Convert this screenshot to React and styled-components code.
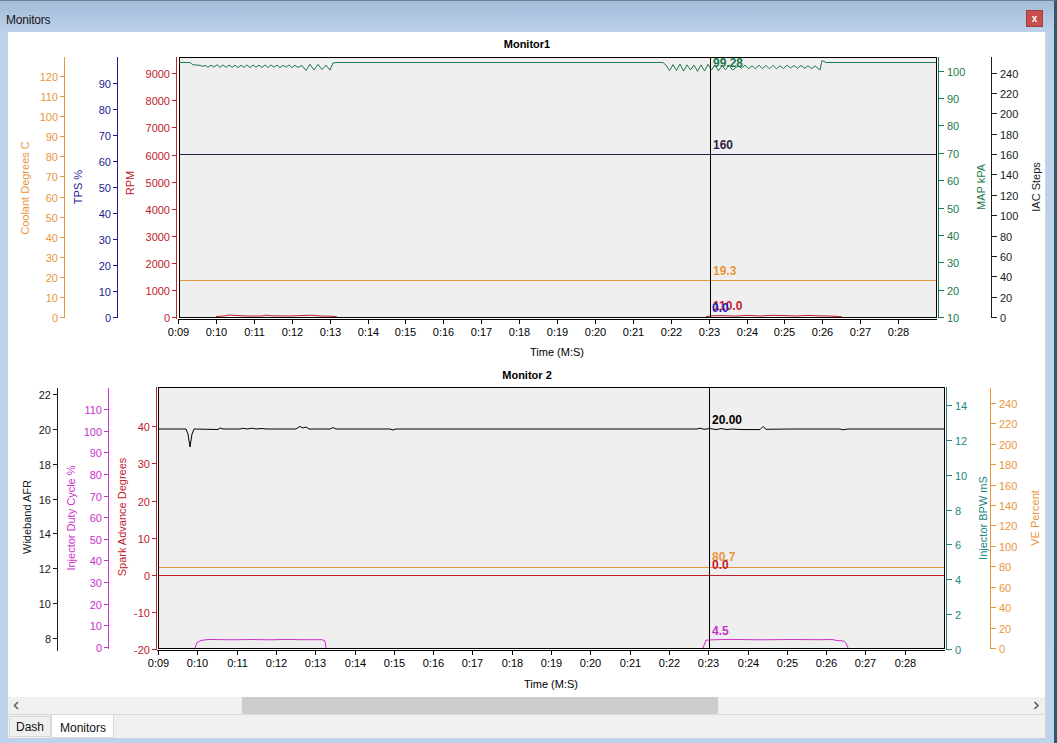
import React from "react";
import styled, { createGlobalStyle } from "styled-components";

const GlobalStyle = createGlobalStyle`
  html, body { margin: 0; padding: 0; background: #fff; }
  body { font-family: "Liberation Sans", Arial, sans-serif; overflow: hidden; }
`;

const ORANGE = "#e8963c";
const NAVY = "#1c1c8e";
const RED = "#c4202a";
const GREEN = "#1d7a4d";
const DARK = "#1a1a1a";
const MAGENTA = "#cc30cc";
const TEAL = "#248585";
const PURPLE = "#2e1f46";

const Window = styled.div`
  width: 1057px;
  height: 743px;
  box-sizing: border-box;
  display: flex;
  flex-direction: column;
  background: linear-gradient(180deg, #a4bcd9 0px, #bcd1ea 31px, #bdd3ec 100%);
  border-top: 1px solid #6d8094;
  border-right: 3px solid #34566b;
  padding: 0 8px 5px 8px;
`;

const TitleBar = styled.div`
  height: 31px;
  flex: none;
  display: flex;
  justify-content: space-between;
  align-items: flex-start;
`;

const Title = styled.span`
  margin: 12px 0 0 -2px;
  font-size: 12px;
  color: #161616;
  letter-spacing: -0.2px;
`;

const CloseButton = styled.div`
  width: 17px;
  height: 17px;
  margin: 9px 3px 0 0;
  background: #c7504f;
  border: 1px solid #a33e3e;
  box-sizing: border-box;
  color: #fff;
  font-size: 10px;
  font-weight: bold;
  display: flex;
  align-items: center;
  justify-content: center;
  line-height: 1;
`;

const Body = styled.div`
  flex: 1;
  display: flex;
  flex-direction: column;
  background: #f0f0f0;
  border-right: 1px solid #d4d4d4;
`;

const ChartArea = styled.div`
  height: 665px;
  flex: none;
  background: #fff;
  display: flex;
  flex-direction: column;
`;

const ChartSvg = styled.svg`
  display: block;
  font-family: "Liberation Sans", Arial, sans-serif;
`;

const AxisLabel = styled.text`
  font-size: 11px;
  fill: ${(p) => p.$color};
`;

const AxisTitle = styled.text`
  font-size: 11px;
  fill: ${(p) => p.$color};
`;

const ValueText = styled.text`
  font-size: 12px;
  font-weight: bold;
  fill: ${(p) => p.$color};
`;

const ChartTitle = styled.text`
  font-size: 11px;
  font-weight: bold;
  fill: #000;
`;

const ScrollBar = styled.div`
  height: 17px;
  flex: none;
  display: flex;
  align-items: stretch;
  background: #f0f0f0;
  border-bottom: 1px solid #dadada;
`;

const ArrowButton = styled.div`
  width: 17px;
  flex: none;
  display: flex;
  align-items: center;
  justify-content: center;
`;

const Track = styled.div`
  flex: 1;
  display: flex;
  align-items: stretch;
`;

const Thumb = styled.div`
  background: #cdcdcd;
  margin-left: ${(p) => p.$offset}px;
  width: ${(p) => p.$size}px;
`;

const TabStrip = styled.div`
  height: 23px;
  flex: none;
  display: flex;
  align-items: flex-start;
  padding-left: 1px;
  background: #f0f0f0;
`;

const Tab = styled.div`
  box-sizing: border-box;
  height: ${(p) => (p.$active ? 23 : 21)}px;
  margin-top: ${(p) => (p.$active ? 0 : 1)}px;
  padding: ${(p) => (p.$active ? "6px 7px 0 8px" : "3px 6px 0 6px")};
  font-size: 12px;
  color: #111;
  background: ${(p) => (p.$active ? "#ffffff" : "#f0f0f0")};
  border: 1px solid #d9d9d9;
  border-top: ${(p) => (p.$active ? "none" : "1px solid #d9d9d9")};
`;

/* ---------- data helpers ---------- */
function rng(seed) {
  let s = seed;
  return () => {
    s = (s * 16807) % 2147483647;
    return (s - 1) / 2147483646;
  };
}

const range = (a, b, step) => {
  const out = [];
  for (let v = a; v <= b + 1e-9; v += step) out.push(v);
  return out;
};

const pts = (arr) => arr.map(([x, y]) => `${x.toFixed(1)},${y.toFixed(1)}`).join(" ");

function zig(x0, x1, step, base, ampFn, seed) {
  const r = rng(seed);
  const out = [];
  let i = 0;
  for (let x = x0; x <= x1; x += step, i++) {
    const a = ampFn(x) * (0.55 + 0.45 * r());
    out.push([x, base + (i % 2 === 0 ? -a : a)]);
  }
  return out;
}

/* Monitor 1 series */
const mapLine = [
  [179, 62.5], [190, 62.5], [193, 64.8], [199, 65.2], [203, 66.4],
  ...zig(205, 300, 3, 66.2, () => 1.6, 11),
  ...zig(302, 330, 4, 67.5, () => 3.6, 5),
  [333, 63], [336, 62.5], [663, 62.5],
  ...zig(666, 735, 3.5, 67.5, () => 4.2, 3),
  ...zig(738, 818, 3.5, 67, () => 2, 17),
  [820, 70], [822, 60.5], [826, 62.5], [936, 62.5],
];

const rpmA = [
  [216, 316.5], [224, 316], [229, 315], [235, 315.4], [248, 316], [262, 316], [266, 315.2],
  [272, 315.8], [290, 316], [305, 315.4], [312, 315.2], [320, 316], [330, 316.2], [337, 316.8],
];
const rpmB = [
  [706, 316.6], [712, 315.8], [722, 315.6], [735, 316.1], [748, 315.4], [760, 316], [772, 315.3],
  [786, 315.6], [796, 316], [808, 315.4], [818, 315.8], [830, 316], [842, 316.8],
];

/* Monitor 2 series */
const afrLine = [
  [158, 429], [186, 429], [188, 434], [190, 447], [192, 434], [194, 429], [218, 429.5],
  [220, 428], [223, 429], [240, 429], [243, 428.3], [247, 429], [252, 428.2], [256, 429],
  [262, 428.5], [266, 429], [296, 429], [298, 427.5], [300, 426.5], [303, 428], [306, 427],
  [309, 429], [330, 429], [333, 427.5], [336, 429], [390, 429], [393, 430], [396, 429],
  [697, 429], [700, 428.2], [704, 429.3], [710, 428.5], [716, 429.6], [721, 428.6], [727, 429.5],
  [732, 429], [740, 429.5], [760, 429.6], [763, 426.5], [766, 429.3], [790, 429], [840, 429],
  [843, 429.8], [848, 429], [944, 429],
];

const dutyA = [
  [195, 648], [197, 642.5], [201, 640.5], [208, 639.5], [214, 639.5], [232, 639.8],
  [250, 639.5], [270, 639.8], [288, 639.4], [300, 639.7], [322, 639.7], [325, 641], [326, 648],
];
const dutyB = [
  [703, 648], [706, 640.2], [712, 639.8], [730, 639.4], [760, 639.8], [790, 639.5],
  [820, 639.7], [832, 639.5], [837, 640.5], [844, 641], [846, 643], [848, 648],
];

/* ---------- chart configs ---------- */
const monitor1 = {
  viewY: 32,
  height: 333,
  title: "Monitor1",
  titleY: 44,
  plot: { x0: 179, x1: 936, y0: 57, y1: 317 },
  xAxis: { y: 319, x0: 178, x1: 936, start: 178, step: 37.9, count: 20, labelY: 332, titleX: 557, titleY: 352 },
  axes: [
    { x: 64, side: "left", color: ORANGE, top: 57, bottom: 317, ticks: range(0, 120, 10).map((v) => [v, 317 - v * 2.008]), title: "Coolant Degrees C", tx: 25, ty: 188 },
    { x: 117, side: "left", color: NAVY, top: 57, bottom: 317, ticks: range(0, 90, 10).map((v) => [v, 317 - v * 2.597]), title: "TPS %", tx: 78, ty: 187 },
    { x: 176, side: "left", color: RED, top: 57, bottom: 318, ticks: range(0, 9000, 1000).map((v) => [v, 317 - v * 0.02708]), title: "RPM", tx: 130, ty: 183 },
    { x: 938, side: "right", color: GREEN, top: 57, bottom: 317, ticks: range(10, 100, 10).map((v) => [v, 317 - (v - 10) * 2.737]), title: "MAP kPA", tx: 981, ty: 187 },
    { x: 991, side: "right", color: DARK, top: 57, bottom: 317, ticks: range(0, 240, 20).map((v) => [v, 317 - v * 1.018]), title: "IAC Steps", tx: 1036, ty: 187 },
  ],
  levels: [
    { color: PURPLE, y: 154 },
    { color: ORANGE, y: 280 },
  ],
  series: [
    { color: GREEN, points: mapLine },
    { color: RED, points: rpmA },
    { color: RED, points: rpmB },
  ],
  cursorX: 710,
  values: [
    { text: "99.28", color: GREEN, x: 713, y: 67 },
    { text: "160", color: PURPLE, x: 713, y: 148.5 },
    { text: "19.3", color: ORANGE, x: 713, y: 274.5 },
    { text: "110.0", color: RED, x: 713, y: 309.5 },
    { text: "0.0", color: "#2323c8", x: 712, y: 312 },
  ],
};

const monitor2 = {
  viewY: 365,
  height: 332,
  title: "Monitor 2",
  titleY: 375,
  plot: { x0: 158, x1: 944, y0: 387, y1: 648 },
  xAxis: { y: 650, x0: 157, x1: 944, start: 158, step: 39.3, count: 20, labelY: 663, titleX: 551, titleY: 684 },
  axes: [
    { x: 57, side: "left", color: DARK, top: 388, bottom: 650, ticks: range(8, 22, 2).map((v) => [v, 638 - (v - 8) * 17.43]), title: "Wideband AFR", tx: 27, ty: 517 },
    { x: 108, side: "left", color: MAGENTA, top: 388, bottom: 648, ticks: range(0, 110, 10).map((v) => [v, 647 - v * 2.164]), title: "Injector Duty Cycle %", tx: 71, ty: 518 },
    { x: 156, side: "left", color: RED, top: 387, bottom: 649, ticks: range(-20, 40, 10).map((v) => [v, 575 - v * 3.72]), title: "Spark Advance Degrees", tx: 122, ty: 517 },
    { x: 946, side: "right", color: TEAL, top: 387, bottom: 649, ticks: range(0, 14, 2).map((v) => [v, 649 - v * 17.43]), title: "Injector BPW mS", tx: 983, ty: 518 },
    { x: 990, side: "right", color: ORANGE, top: 388, bottom: 648, ticks: range(0, 240, 20).map((v) => [v, 648 - v * 1.021]), title: "VE Percent", tx: 1035, ty: 518 },
  ],
  levels: [
    { color: ORANGE, y: 567 },
    { color: RED, y: 575 },
  ],
  series: [
    { color: "#000", points: afrLine },
    { color: MAGENTA, points: dutyA },
    { color: MAGENTA, points: dutyB },
  ],
  cursorX: 709,
  values: [
    { text: "20.00", color: "#000", x: 712, y: 423.5 },
    { text: "80.7", color: ORANGE, x: 712, y: 561 },
    { text: "0.0", color: RED, x: 712, y: 568.5 },
    { text: "4.5", color: MAGENTA, x: 712, y: 634.5 },
  ],
};

/* ---------- chart parts ---------- */
function Axis({ a }) {
  const left = a.side === "left";
  const dir = left ? -1 : 1;
  const x = a.x + 0.5;
  return (
    <g>
      <line x1={x} y1={a.top} x2={x} y2={a.bottom + 1} stroke={a.color} shapeRendering="crispEdges" />
      {a.ticks.map(([v, y]) => {
        const yy = Math.round(y) + 0.5;
        return (
          <g key={v}>
            <line x1={x} x2={x + dir * 5} y1={yy} y2={yy} stroke={a.color} shapeRendering="crispEdges" />
            <AxisLabel
              x={left ? a.x - 6 : a.x + 9}
              y={yy}
              textAnchor={left ? "end" : "start"}
              dominantBaseline="central"
              $color={a.color}
            >
              {v}
            </AxisLabel>
          </g>
        );
      })}
      <AxisTitle
        transform={`rotate(-90 ${a.tx} ${a.ty})`}
        x={a.tx}
        y={a.ty}
        textAnchor="middle"
        dominantBaseline="central"
        $color={a.color}
      >
        {a.title}
      </AxisTitle>
    </g>
  );
}

function Chart({ c }) {
  const { plot, xAxis } = c;
  const ticks = Array.from({ length: xAxis.count }, (_, i) => i);
  return (
    <ChartSvg width={1037} height={c.height} viewBox={`8 ${c.viewY} 1037 ${c.height}`}>
      <ChartTitle x={527} y={c.titleY} textAnchor="middle" dominantBaseline="central">
        {c.title}
      </ChartTitle>
      <rect
        x={plot.x0 + 0.5}
        y={plot.y0 + 0.5}
        width={plot.x1 - plot.x0}
        height={plot.y1 - plot.y0}
        fill="#efefef"
        stroke="#000"
        shapeRendering="crispEdges"
      />
      {c.axes.map((a) => (
        <Axis key={a.title} a={a} />
      ))}
      <line x1={xAxis.x0} x2={xAxis.x1 + 1} y1={xAxis.y + 0.5} y2={xAxis.y + 0.5} stroke="#000" shapeRendering="crispEdges" />
      {ticks.map((i) => {
        const tx = Math.round(xAxis.start + i * xAxis.step) + 0.5;
        return (
          <g key={i}>
            <line x1={tx} x2={tx} y1={xAxis.y} y2={xAxis.y + 5} stroke="#000" shapeRendering="crispEdges" />
            <AxisLabel x={tx} y={xAxis.labelY} textAnchor="middle" dominantBaseline="central" $color="#000">
              {`0:${String(9 + i).padStart(2, "0")}`}
            </AxisLabel>
          </g>
        );
      })}
      <AxisLabel x={xAxis.titleX} y={xAxis.titleY} textAnchor="middle" dominantBaseline="central" $color="#000">
        Time (M:S)
      </AxisLabel>
      {c.levels.map((l, i) => (
        <line
          key={`l${i}`}
          x1={plot.x0 + 1}
          x2={plot.x1}
          y1={l.y + 0.5}
          y2={l.y + 0.5}
          stroke={l.color}
          strokeWidth={1}
          shapeRendering="crispEdges"
        />
      ))}
      {c.series.map((s, i) => (
        <polyline key={i} points={pts(s.points)} fill="none" stroke={s.color} strokeWidth={1} />
      ))}
      <line
        x1={c.cursorX + 0.5}
        x2={c.cursorX + 0.5}
        y1={plot.y0}
        y2={plot.y1}
        stroke="#000"
        shapeRendering="crispEdges"
      />
      {c.values.map((v, i) => (
        <ValueText key={i} x={v.x} y={v.y} $color={v.color}>
          {v.text}
        </ValueText>
      ))}
    </ChartSvg>
  );
}

function Chevron({ dir }) {
  const d = dir === "left" ? "M5 1 L1.5 4.5 L5 8" : "M1.5 1 L5 4.5 L1.5 8";
  return (
    <svg width="7" height="9" viewBox="0 0 7 9">
      <path d={d} fill="none" stroke="#606060" strokeWidth="1.6" />
    </svg>
  );
}

export default function App() {
  return (
    <>
      <GlobalStyle />
      <Window>
        <TitleBar>
          <Title>Monitors</Title>
          <CloseButton>x</CloseButton>
        </TitleBar>
        <Body>
          <ChartArea>
            <Chart c={monitor1} />
            <Chart c={monitor2} />
          </ChartArea>
          <ScrollBar>
            <ArrowButton>
              <Chevron dir="left" />
            </ArrowButton>
            <Track>
              <Thumb $offset={217} $size={476} />
            </Track>
            <ArrowButton>
              <Chevron dir="right" />
            </ArrowButton>
          </ScrollBar>
          <TabStrip>
            <Tab>Dash</Tab>
            <Tab $active>Monitors</Tab>
          </TabStrip>
        </Body>
      </Window>
    </>
  );
}
